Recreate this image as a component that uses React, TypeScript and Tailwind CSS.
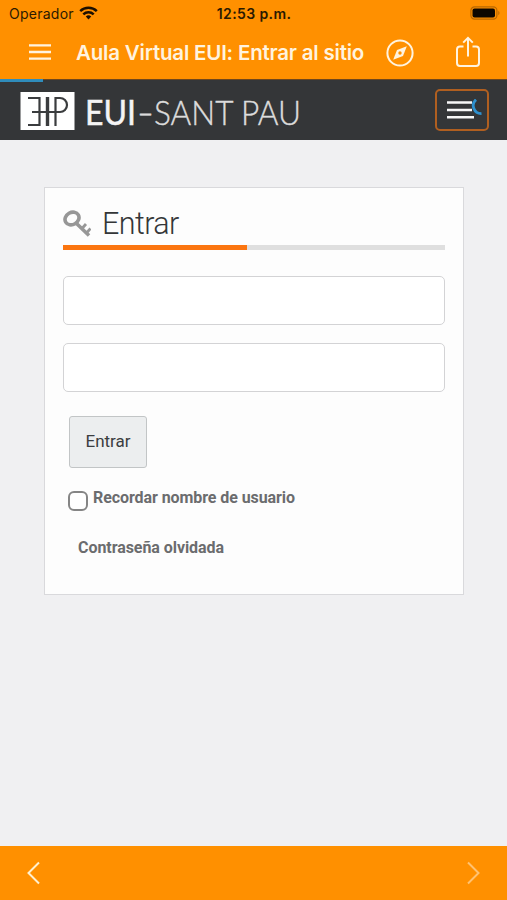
import { useState, ChangeEvent, FormEvent } from "react";

type fieldProps = {
  type: string;
  label: string;
  value: string;
  onChange: (event: ChangeEvent<HTMLInputElement>) => void;
}

const StatusBar = () => {
  return (
    <div className="grid h-[27px] grid-cols-3 items-center pl-[9px] pr-[6px] font-['Inter','Liberation_Sans',sans-serif] leading-none text-[#2b1a00]">
      <div className="flex items-center gap-[5px]">
        <span className="text-[14px] tracking-[0.25px]">Operador</span>
        <svg className="mb-[2px]" width="19" height="14" viewBox="0 0 19 14" fill="none" stroke="#1c1000" strokeWidth="2.5">
          <path d="M1.2 5.2a12 12 0 0 1 16.6 0" />
          <path d="M4.3 8.4a7.5 7.5 0 0 1 10.4 0" />
          <path d="M6.8 10.6a4 4 0 0 1 5.4 0L9.5 13.4Z" fill="#1c1000" stroke="none" />
        </svg>
      </div>
      <span className="whitespace-nowrap pr-[2px] text-center text-[14px] font-semibold tracking-[0.4px]">12:53 p.m.</span>
      <div className="flex justify-end">
        <svg className="mb-[2px]" width="31" height="14" viewBox="0 0 31 14">
          <rect x="0.9" y="0.9" width="26" height="12.2" rx="3.6" fill="none" stroke="#b96800" strokeWidth="1.2" />
          <rect x="2.5" y="2.5" width="22.5" height="9" rx="2" fill="#0d0700" />
          <path d="M28.3 4.8c1.6.8 1.6 3.6 0 4.4Z" fill="#b96800" />
        </svg>
      </div>
    </div>
  );
};

const NavBar = () => {
  return (
    <div className="flex h-[52px] items-center pl-[29px] pr-[26px] text-[#fff3df]">
      <svg className="mb-[2px] shrink-0" width="22" height="16" viewBox="0 0 22 16" stroke="currentColor" strokeWidth="2.4">
        <path d="M0 1.4h22M0 8h22M0 14.6h22" />
      </svg>
      <h1 className="ml-[25px] w-[288px] whitespace-nowrap font-['Inter','Liberation_Sans',sans-serif] text-[20.5px] font-semibold leading-none tracking-[-0.2px]">
        Aula Virtual EUI: Entrar al sitio
      </h1>
      <svg className="mb-px ml-[22px] shrink-0" width="28" height="28" viewBox="0 0 28 28" fill="none" stroke="currentColor" strokeWidth="2">
        <circle cx="14" cy="14" r="12.6" />
        <path d="M20.8 7.2 11 11 7.2 20.8 17 17Z" fill="currentColor" stroke="none" />
        <circle cx="14" cy="14" r="1.7" fill="#ff9000" stroke="none" />
      </svg>
      <svg className="mb-[3px] ml-[41px] shrink-0" width="26" height="32" viewBox="0 0 26 32" fill="none" stroke="currentColor" strokeWidth="2">
        <path d="M8.5 10.5H5a3 3 0 0 0-3 3V27a3 3 0 0 0 3 3h16a3 3 0 0 0 3-3V13.5a3 3 0 0 0-3-3h-3.5" />
        <path d="M13 20.5V2M8.2 6.6 13 1.8l4.8 4.8" />
      </svg>
    </div>
  );
};

const SiteHeader = () => {
  return (
    <header className="h-[61px] bg-[#343638]">
      <div className="h-px bg-[#70471b]">
        <div className="h-[3px] w-[43px] bg-[#2f8cbb]" />
      </div>
      <div className="flex h-[60px] items-center justify-between pl-[20px] pr-[18px]">
        <svg className="mt-[3px] overflow-visible" width="284" height="46" viewBox="0 -3 284 46">
          <rect x="0.5" width="54" height="38" fill="#fff" />
          <g fill="none" stroke="#3a3c3e" strokeWidth="2.2">
            <path d="M8 6h11.5V33H8M12 20h28a7 7 0 0 0 0-14H35.5v28" />
            <path d="M27.5 5v29" strokeWidth="3.4" />
          </g>
          <g fontFamily="Lato, 'Liberation Sans', sans-serif" fontSize="34">
            <text x="65" y="32.5" fill="#f4f4f4" stroke="#f4f4f4" strokeWidth="0.5" textLength="51" lengthAdjust="spacingAndGlyphs">EUI</text>
            <text x="117" y="32.5" fontWeight="300" fill="#dcdcdc" stroke="#dcdcdc" strokeWidth="0.6" textLength="17" lengthAdjust="spacingAndGlyphs">-</text>
            <text x="134" y="32.5" fontWeight="300" fill="#dcdcdc" stroke="#dcdcdc" strokeWidth="0.4" textLength="147" lengthAdjust="spacingAndGlyphs">SANT PAU</text>
          </g>
        </svg>
        <button aria-label="Menú" className="flex h-[42px] w-[54px] items-center justify-end rounded-[5px] border-2 border-[#b05f20] pr-[4px]">
          <svg width="36" height="22" viewBox="0 0 36 22" fill="none">
            <path d="M0 3.5h25M0 11h25M0 18.2h27" stroke="#f7f7f7" strokeWidth="2.6" />
            <path d="M29.8 0.6A8.2 8.2 0 0 0 34.8 14.6" stroke="#343638" strokeWidth="4" />
            <path d="M29 0.6A8 8 0 0 0 34.5 14.6" stroke="#2e91cf" strokeWidth="2.8" />
          </svg>
        </button>
      </div>
    </header>
  );
};

const KeyIcon = () => {
  return (
    <svg className="mb-[3px]" width="28" height="28" viewBox="0 0 28 28" fill="none" stroke="#979797">
      <ellipse cx="9" cy="8.5" rx="7.3" ry="6" transform="rotate(-30 9 8.5)" strokeWidth="3.6" />
      <path d="M12.5 12.5 26 25.5" strokeWidth="3.6" />
      <path d="m19 18.500 4-4.500M23.500 23l4-4.500" strokeWidth="2.800" />
    </svg>
  );
};

const LoginField = (props: fieldProps) => {
  const { type, label, value, onChange } = props;
  return (
    <input
      type={type}
      aria-label={label}
      value={value}
      onChange={onChange}
      className="h-[49px] w-full rounded-[5px] border-[1.5px] border-[#d3d3d5] bg-white px-3 text-[17px] outline-none"
    />
  );
};

const LoginCard = () => {
  const [userName, setUserName] = useState("");
  const [passWord, setPassWord] = useState("");
  const [remember, setRemember] = useState(false);

  const loginSubmit = (event: FormEvent) => {
    event.preventDefault();
  }

  return (
    <form onSubmit={loginSubmit} className="ml-[44px] h-[408px] w-[420px] border border-[#d9d9dc] bg-[#fdfdfd] px-[18px] pt-[18px] font-['Roboto','Liberation_Sans',sans-serif]">
      <div className="flex h-[39px] items-center gap-[11px]">
        <KeyIcon />
        <h2 className="pb-[3px] text-[30.5px] font-light leading-none tracking-[-0.6px] text-[#343638]">Entrar</h2>
      </div>
      <div className="h-[5px] bg-[#dfdfdf]">
        <div className="h-full w-[184px] bg-[#fb7510]" />
      </div>

      <div className="mt-[26px] flex flex-col gap-[18px]">
        <LoginField type="text" label="Nombre de usuario" value={userName} onChange={(e) => setUserName(e.target.value)} />
        <LoginField type="password" label="Contraseña" value={passWord} onChange={(e) => setPassWord(e.target.value)} />
      </div>

      <button type="submit" className="ml-[6px] mt-[24px] block h-[52px] w-[78px] rounded-[3px] border-[1.5px] border-[#c2c5c6] bg-[#eceeef] text-[17px] text-[#3b3d40]">
        Entrar
      </button>

      <label className="ml-[5px] mt-[22px] flex h-[22px] items-start gap-[5px] text-[16px] font-bold leading-[16px] tracking-[-0.08px] text-[#6b6c6e]">
        <input
          type="checkbox"
          checked={remember}
          onChange={(e) => setRemember(e.target.checked)}
          className="mt-px h-[20px] w-[20px] shrink-0 appearance-none rounded-[6px] border-2 border-[#858585] bg-white checked:bg-[#858585]"
        />
        <span className="whitespace-nowrap">Recordar nombre de usuario</span>
      </label>

      <a href="#" className="ml-[15px] mt-[28px] inline-block text-[16px] font-bold leading-[16px] tracking-[-0.06px] text-[#6b6c6e]">Contraseña olvidada</a>
    </form>
  );
};

const BottomBar = () => {
  return (
    <nav className="flex h-[54px] items-center justify-between bg-[#ff9000] px-[26px]">
      <svg width="15" height="24" viewBox="0 0 15 24" fill="none" stroke="#fff0cf" strokeWidth="2">
        <path d="M13 1.5 2.5 12 13 22.5" />
      </svg>
      <svg width="15" height="24" viewBox="0 0 15 24" fill="none" stroke="#ffc272" strokeWidth="2">
        <path d="M2 1.5 12.5 12 2 22.5" />
      </svg>
    </nav>
  );
};

const App = () => {
  return (
    <div className="flex h-[900px] w-[507px] flex-col overflow-hidden bg-[#f0f0f2]">
      <div className="bg-[#ff9000]">
        <StatusBar />
        <NavBar />
      </div>
      <SiteHeader />
      <main className="flex-1 pt-[47px]">
        <LoginCard />
      </main>
      <BottomBar />
    </div>
  );
};

export default App;
